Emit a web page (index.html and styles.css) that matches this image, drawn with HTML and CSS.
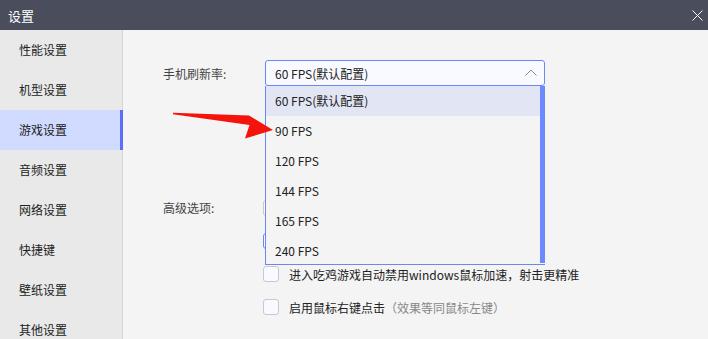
FILE: index.html
```html
<!DOCTYPE html>
<html lang="zh-CN">
<head>
    <meta charset="UTF-8">
    <title>设置</title>
    <link rel="stylesheet" href="styles.css">
</head>
<body>
    <div class="window">
        <header class="titlebar">
            <span class="title">设置</span>
            <svg class="close" width="11" height="11" viewBox="0 0 11 11">
                <path d="M0.5 0.5 L10.5 10.5 M10.5 0.5 L0.5 10.5" stroke="#ffffff" stroke-width="1" fill="none"/>
            </svg>
        </header>
        <div class="main">
            <ul class="sidebar">
                <li class="nav-item">性能设置</li>
                <li class="nav-item">机型设置</li>
                <li class="nav-item active">游戏设置</li>
                <li class="nav-item">音频设置</li>
                <li class="nav-item">网络设置</li>
                <li class="nav-item">快捷键</li>
                <li class="nav-item">壁纸设置</li>
                <li class="nav-item">其他设置</li>
            </ul>
            <div class="content">
                <div class="form-row">
                    <label class="field-label">手机刷新率:</label>
                    <div class="select">
                        <div class="select-value">60 FPS(默认配置)</div>
                        <svg class="chevron" width="12" height="7" viewBox="0 0 12 7">
                            <path d="M0.5 6.5 L6 1 L11.5 6.5" stroke="#8a8c94" stroke-width="1" fill="none"/>
                        </svg>
                        <ul class="dropdown">
                            <li class="option hover">60 FPS(默认配置)</li>
                            <li class="option">90 FPS</li>
                            <li class="option">120 FPS</li>
                            <li class="option">144 FPS</li>
                            <li class="option">165 FPS</li>
                            <li class="option">240 FPS</li>
                            <div class="scroll-thumb"></div>
                        </ul>
                    </div>
                </div>

                <div class="form-row advanced">
                    <label class="field-label adv-label">高级选项:</label>
                    <div class="checks">
                        <!-- these two rows sit under the open dropdown -->
                        <div class="check-row"><span class="box"></span></div>
                        <div class="check-row"><span class="box on"></span></div>
                        <div class="check-row"><span class="box"></span><span>进入吃鸡游戏自动禁用windows鼠标加速，射击更精准</span></div>
                        <div class="check-row"><span class="box"></span><span>启用鼠标右键点击<span class="note">（效果等同鼠标左键）</span></span></div>
                    </div>
                </div>
            </div>
        </div>
    </div>
    <svg class="pointer" width="106" height="32" viewBox="0 0 106 32">
        <polygon points="3,2.7 79,5.5 103,20 75,28.5 79.5,15 3,4.3" fill="#f5140c"/>
    </svg>
</body>
</html>
```

FILE: styles.css
```css
* {
    box-sizing: border-box;
}

body {
    margin: 0;
    width: 708px;
    height: 339px;
    overflow: hidden;
    font-family: "Noto Sans CJK SC", "Noto Sans", sans-serif;
    font-size: 12px;
    position: relative;
}

.window {
    display: flex;
    flex-direction: column;
    height: 339px;
}

.titlebar {
    flex-shrink: 0;
    height: 30px;
    background-color: #4a4d5c;
    color: #fff;
    display: flex;
    align-items: center;
    justify-content: space-between;
    padding: 0 5px 0 8px;
    font-size: 13px;
}

.main {
    flex: 1;
    min-height: 0;
    overflow: hidden;
    display: flex;
    background-color: #f4f4f4;
}

.sidebar {
    list-style: none;
    margin: 0;
    padding: 0;
    width: 123px;
    flex-shrink: 0;
    background-color: #e9e9e9;
    border-right: 1px solid #d6d6d6;
}

.nav-item {
    height: 40px;
    line-height: 40px;
    padding-left: 19px;
    color: #222;
    margin-right: -1px;
}

.nav-item.active {
    background-color: #d0dbff;
    border-right: 3px solid #5a6ff5;
}

.content {
    flex: 1;
    padding: 30px 0 0 40px;
    color: #444;
}

.form-row {
    display: flex;
    align-items: center;
}

.field-label {
    width: 102px;
    color: #444;
}

.select {
    position: relative;
    width: 280px;
    height: 26px;
    border: 1px solid #6e86f4;
    border-radius: 3px;
    background-color: #f9faff;
    display: flex;
    align-items: center;
    justify-content: space-between;
    padding: 0 7px 0 9px;
    color: #222;
}

.chevron {
    margin-top: -1px;
}

.dropdown {
    position: absolute;
    top: 25px;
    left: -1px;
    width: 280px;
    height: 179px;
    margin: 0;
    padding: 0;
    list-style: none;
    background-color: #f4f4f4;
    border-left: 1px solid #6e86f4;
    border-bottom: 1px solid #6e86f4;
    z-index: 2;
}

.option {
    height: 30px;
    line-height: 30px;
    padding-left: 9px;
    color: #222;
}

.option.hover {
    background-color: #e2e5f4;
}

.scroll-thumb {
    position: absolute;
    top: 0;
    right: 0;
    width: 5px;
    height: 177px;
    background-color: #6c89ff;
}

.advanced {
    align-items: flex-start;
    margin-top: 114px;
}

.adv-label {
    width: 100px;
    line-height: 16px;
}

.checks {
    display: flex;
    flex-direction: column;
    gap: 17px;
}

.check-row {
    display: flex;
    align-items: center;
    height: 16px;
    gap: 10px;
    color: #222;
}

.box {
    width: 16px;
    height: 16px;
    border: 1px solid #c6c8d2;
    border-radius: 3px;
    background-color: #f9faff;
}

.box.on {
    border-color: #6e86f4;
}

.note {
    color: #888;
}

.pointer {
    position: absolute;
    left: 170px;
    top: 110px;
    z-index: 3;
}
```
